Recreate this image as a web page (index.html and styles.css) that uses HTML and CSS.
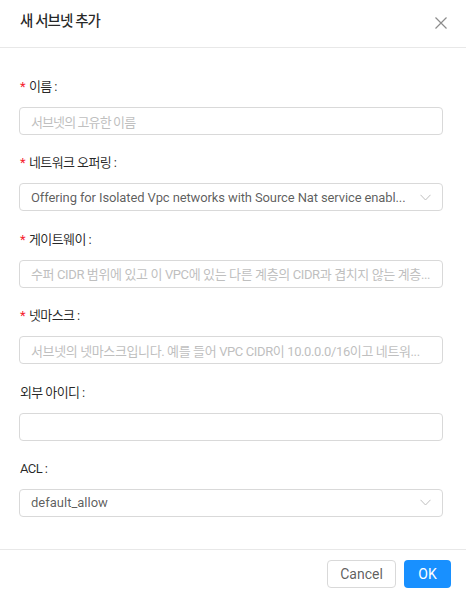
FILE: index.html
```html
<!DOCTYPE html>
<html lang="ko">
<head>
<meta charset="utf-8">
<link rel="stylesheet" href="styles.css">
</head>
<body>
<div class="modal">
  <div class="header">
    <div class="title">새 서브넷 추가</div>
    <svg class="close" width="12" height="12" viewBox="0 0 12 12"><path d="M0.5 0.5 L11.5 11.5 M11.5 0.5 L0.5 11.5" stroke="#8c8c8c" stroke-width="1.2" fill="none"/></svg>
  </div>
  <div class="body">
    <div class="item">
      <div class="label"><span class="req">*</span>이름 :</div>
      <div class="input placeholder ko">서브넷의 고유한 이름</div>
    </div>
    <div class="item">
      <div class="label"><span class="req">*</span>네트워크 오퍼링 :</div>
      <div class="input select"><span class="val tight">Offering for Isolated Vpc networks with Source Nat service enabl...</span><svg class="chev" width="11" height="7" viewBox="0 0 11 7"><path d="M0.5 0.8 L5.5 6 L10.5 0.8" stroke="#bfbfbf" stroke-width="1" fill="none"/></svg></div>
    </div>
    <div class="item">
      <div class="label"><span class="req">*</span>게이트웨이 :</div>
      <div class="input placeholder mixed">수퍼 CIDR 범위에 있고 이 VPC에 있는 다른 계층의 CIDR과 겹치지 않는 계층...</div>
    </div>
    <div class="item">
      <div class="label"><span class="req">*</span>넷마스크 :</div>
      <div class="input placeholder mixed">서브넷의 넷마스크입니다. 예를 들어 VPC CIDR이 10.0.0.0/16이고 네트워...</div>
    </div>
    <div class="item">
      <div class="label">외부 아이디 :</div>
      <div class="input"></div>
    </div>
    <div class="item">
      <div class="label">ACL :</div>
      <div class="input select"><span class="val">default_allow</span><svg class="chev" width="11" height="7" viewBox="0 0 11 7"><path d="M0.5 0.8 L5.5 6 L10.5 0.8" stroke="#bfbfbf" stroke-width="1" fill="none"/></svg></div>
    </div>
  </div>
  <div class="footer">
    <div class="btn cancel">Cancel</div>
    <div class="btn ok">OK</div>
  </div>
</div>
</body>
</html>
```
FILE: styles.css
```css
* { box-sizing: border-box; }
html, body { margin: 0; padding: 0; background: #fff; }
body {
  font-family: Roboto, "Noto Sans CJK KR", sans-serif;
  font-size: 14px;
  color: rgba(0,0,0,0.85);
  width: 466px;
  height: 595px;
  overflow: hidden;
}
.modal { display: flex; flex-direction: column; height: 595px; }
.header {
  height: 48px;
  border-bottom: 1px solid #e8e8e8;
  display: flex;
  align-items: center;
  justify-content: space-between;
  padding: 0 19px 0 20px;
}
.title { font-size: 14.5px; font-weight: 500; letter-spacing: -0.9px; color: rgba(0,0,0,0.85); line-height: 22px; margin-top: -3px; }
.close { margin-top: -2px; }
.body { padding: 28px 23px 0 19px; flex: 1; }
.item { margin-bottom: 17.4px; }
.label { line-height: 22px; height: 22px; margin-bottom: 9px; font-size: 13px; padding-left: 1px; letter-spacing: -0.6px; }
.req { color: #f5222d; margin-right: 4px; font-size: 13px; }
.input {
  height: 28px;
  border: 1px solid #d9d9d9;
  border-radius: 4px;
  padding: 0 11px;
  display: flex;
  align-items: center;
  font-size: 13px;
  white-space: nowrap;
  overflow: hidden;
}
.placeholder { color: #bfbfbf; }
.ko { letter-spacing: -0.9px; }
.mixed { letter-spacing: -0.38px; }
.tight { letter-spacing: -0.12px; }
.select { justify-content: space-between; color: rgba(0,0,0,0.65); }
.select .val { overflow: hidden; }
.chev { flex: none; margin-left: 2px; }
.footer {
  border-top: 1px solid #e8e8e8;
  height: 46px;
  display: flex;
  justify-content: flex-end;
  align-items: flex-start;
  padding: 10px 15px 0 0;
  gap: 8px;
}
.btn {
  height: 28px;
  border-radius: 4px;
  display: flex;
  align-items: center;
  justify-content: center;
  font-size: 14px;
}
.cancel { width: 69px; border: 1px solid #d9d9d9; color: rgba(0,0,0,0.65); }
.ok { width: 47px; background: #1890ff; color: #fff; }
```
